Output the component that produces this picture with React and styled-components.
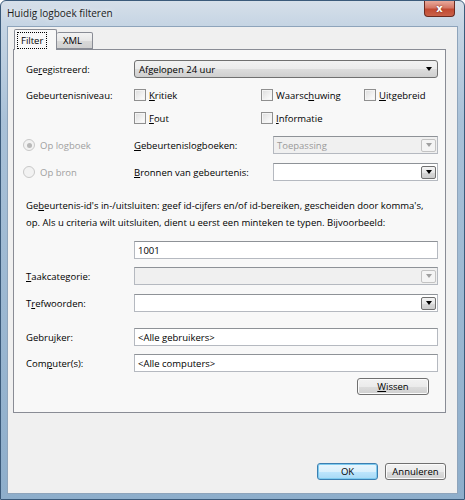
import React from 'react';
import styled, { createGlobalStyle } from 'styled-components';

const Global = createGlobalStyle`
  html, body { margin: 0; padding: 0; background: #ffffff; }
  body {
    font-family: "Open Sans", "Noto Sans", sans-serif;
    font-size: 9.5px;
    color: #000;
  }
  u { text-decoration: underline; text-underline-offset: 1px; }
`;

const Window = styled.div`
  width: 465px;
  height: 500px;
  box-sizing: border-box;
  display: flex;
  flex-direction: column;
  border: 1px solid #3b5a7a;
  border-radius: 6px 6px 0 0;
  padding: 0 6px 5px 6px;
  background: linear-gradient(180deg, #d6dfe9 0px, #c6d5e4 24px, #a9c1d8 120px, #8eaecb 100%);
`;

const TitleBar = styled.div`
  height: 25px;
  display: flex;
  justify-content: space-between;
  align-items: flex-start;
`;

const Title = styled.div`
  padding-top: 5px;
  font-size: 10px;
  color: #1a1a1a;
  text-shadow: 0 0 6px #ffffff;
`;

const CloseBtn = styled.div`
  width: 31px;
  height: 16px;
  margin-right: 3px;
  box-sizing: border-box;
  border: 1px solid #6b2a20;
  border-top: none;
  border-radius: 0 0 4px 4px;
  background: linear-gradient(180deg, #e9a99a 0%, #d47766 45%, #c24a32 55%, #c9624a 100%);
  color: #fff;
  font-family: "DejaVu Sans", sans-serif;
  font-weight: bold;
  font-size: 10px;
  display: flex;
  align-items: center;
  justify-content: center;
  text-shadow: 0 0 2px #6b2a20;
`;

const Client = styled.div`
  flex: 1;
  display: flex;
  flex-direction: column;
  background: #f0f0f0;
  border: 1px solid #8ea4bb;
  padding: 2px 11px 0 5px;
`;

const Tabs = styled.div`
  display: flex;
  align-items: flex-end;
  height: 20px;
  margin-left: 1px;
  position: relative;
  z-index: 1;
`;

const Tab = styled.div`
  box-sizing: border-box;
  height: ${p => (p.$active ? '21px' : '17px')};
  width: ${p => p.$w}px;
  margin-bottom: ${p => (p.$active ? '-1px' : '0')};
  border: 1px solid #898c95;
  border-bottom: ${p => (p.$active ? 'none' : '1px solid #898c95')};
  border-left: ${p => (p.$active ? '1px solid #898c95' : 'none')};
  border-radius: 2px 2px 0 0;
  background: ${p => (p.$active ? '#f8f8f8' : 'linear-gradient(180deg, #f3f3f3 0%, #e8e8e8 50%, #d9d9d9 51%, #d0d0d0 100%)')};
  display: flex;
  align-items: ${p => (p.$active ? 'flex-start' : 'center')};
  padding: ${p => (p.$active ? '2px 0 0 2px' : '0 0 0 6px')};
`;

const Focus = styled.span`
  border: 1px dotted #000;
  padding: 1px 3px 1px 3px;
  line-height: 13px;
`;

const Panel = styled.div`
  height: 364px;
  box-sizing: border-box;
  border: 1px solid #898c95;
  background: #f8f8f8;
  padding: 0 7px 0 12px;
  display: flex;
  flex-direction: column;
`;

const Row = styled.div`
  display: grid;
  grid-template-columns: 108px 1fr;
  align-items: center;
  height: ${p => p.$h}px;
  margin-top: ${p => p.$mt}px;
`;

const Label = styled.div`
  white-space: nowrap;
  color: ${p => (p.$disabled ? '#a0a0a0' : '#000')};
`;

const DropList = styled.div`
  height: 18px;
  box-sizing: border-box;
  border: 1px solid #707070;
  border-radius: 3px;
  background: linear-gradient(180deg, #f2f2f2 0%, #ebebeb 50%, #dddddd 51%, #cfcfcf 100%);
  display: flex;
  align-items: center;
  justify-content: space-between;
  padding: 0 5px 0 4px;
`;

const Arrow = styled.span`
  width: 0;
  height: 0;
  border-left: 3.5px solid transparent;
  border-right: 3.5px solid transparent;
  border-top: 4px solid ${p => (p.$disabled ? '#a0a0a0' : '#000')};
`;

const Field = styled.div`
  height: 18px;
  box-sizing: border-box;
  border: 1px solid #b5b9c0;
  border-top-color: #8e9297;
  background: ${p => (p.$disabled ? '#f0f0f0' : '#ffffff')};
  color: ${p => (p.$disabled ? '#9a9a9a' : '#000')};
  display: flex;
  align-items: center;
  justify-content: space-between;
  padding: 0 1px 0 3px;
`;

const FieldBtn = styled.div`
  width: 15px;
  height: 13px;
  box-sizing: border-box;
  border: 1px solid ${p => (p.$disabled ? '#c3c3c3' : '#707070')};
  border-radius: 2px;
  background: ${p => (p.$disabled ? '#f4f4f4' : 'linear-gradient(180deg, #f4f4f4 0%, #e6e6e6 50%, #d8d8d8 51%, #cccccc 100%)')};
  display: flex;
  align-items: center;
  justify-content: center;
`;

const Checks = styled.div`
  display: grid;
  grid-template-columns: 127px 103px auto;
  align-items: center;
`;

const CheckItem = styled.div`
  display: flex;
  align-items: center;
  gap: 3px;
`;

const Box = styled.span`
  width: 12px;
  height: 12px;
  box-sizing: border-box;
  border: 1px solid #8f8f8f;
  background: linear-gradient(135deg, #dcdcdc 0%, #f2f2f2 60%, #ffffff 100%);
  box-shadow: inset 0 0 0 1px #f4f4f4;
`;

const RadioItem = styled.div`
  display: flex;
  align-items: center;
  gap: 5px;
  margin-left: -3px;
  color: #a0a0a0;
`;

const RadioCircle = styled.span`
  width: 12px;
  height: 12px;
  box-sizing: border-box;
  border-radius: 50%;
  border: 1px solid #c8c8c8;
  background: #f2f2f2;
  display: flex;
  align-items: center;
  justify-content: center;
  &::after {
    content: '';
    width: 5px;
    height: 5px;
    border-radius: 50%;
    background: ${p => (p.$on ? '#b8b8b8' : 'transparent')};
  }
`;

const Split = styled.div`
  display: grid;
  grid-template-columns: 139px 1fr;
  align-items: center;
`;

const Para = styled.div`
  margin-top: 16px;
  line-height: 17px;
  height: 34px;
  white-space: nowrap;
`;

const ButtonRow = styled.div`
  display: flex;
  justify-content: flex-end;
  margin-top: ${p => p.$mt || 0}px;
  margin-right: ${p => p.$mr || 0}px;
`;

const Button = styled.div`
  width: ${p => p.$w}px;
  height: 17px;
  box-sizing: border-box;
  border: 1px solid ${p => (p.$default ? '#3c7fb1' : '#707070')};
  border-radius: 3px;
  background: ${p => (p.$default
    ? 'linear-gradient(180deg, #eaf6fd 0%, #d9f0fc 50%, #bee6fd 51%, #a7d9f5 100%)'
    : 'linear-gradient(180deg, #f2f2f2 0%, #ebebeb 50%, #dddddd 51%, #cfcfcf 100%)')};
  box-shadow: ${p => (p.$default ? 'inset 0 0 0 1px #7fcbef' : 'inset 0 0 0 1px #fbfbfb')};
  display: flex;
  align-items: center;
  justify-content: center;
`;

const Footer = styled.div`
  flex: 1;
  display: flex;
  align-items: flex-end;
  justify-content: flex-end;
  padding-bottom: 13px;
  gap: 7px;
`;

export default function App() {
  return (
    <>
      <Global />
      <Window>
        <TitleBar>
          <Title>Huidig logboek filteren</Title>
          <CloseBtn>x</CloseBtn>
        </TitleBar>
        <Client>
          <Tabs>
            <Tab $active $w={43}><Focus>Filter</Focus></Tab>
            <Tab $w={36}>XML</Tab>
          </Tabs>
          <Panel>
            <Row $h={18} $mt={10}>
              <Label>Ge<u>r</u>egistreerd:</Label>
              <DropList>
                <span>Afgelopen 24 uur</span>
                <Arrow />
              </DropList>
            </Row>
            <Row $h={14} $mt={10}>
              <Label>Gebeurtenisniveau:</Label>
              <Checks>
                <CheckItem><Box /><span><u>K</u>ritiek</span></CheckItem>
                <CheckItem><Box /><span>Waarsc<u>h</u>uwing</span></CheckItem>
                <CheckItem><Box /><span><u>U</u>itgebreid</span></CheckItem>
              </Checks>
            </Row>
            <Row $h={14} $mt={9}>
              <span />
              <Checks>
                <CheckItem><Box /><span><u>F</u>out</span></CheckItem>
                <CheckItem><Box /><span><u>I</u>nformatie</span></CheckItem>
              </Checks>
            </Row>
            <Row $h={18} $mt={11}>
              <RadioItem><RadioCircle $on /><span>Op logboek</span></RadioItem>
              <Split>
                <Label><u>G</u>ebeurtenislogboeken:</Label>
                <Field $disabled>
                  <span>Toepassing</span>
                  <FieldBtn $disabled><Arrow $disabled /></FieldBtn>
                </Field>
              </Split>
            </Row>
            <Row $h={18} $mt={9}>
              <RadioItem><RadioCircle /><span>Op bron</span></RadioItem>
              <Split>
                <Label><u>B</u>ronnen van gebeurtenis:</Label>
                <Field>
                  <span />
                  <FieldBtn><Arrow /></FieldBtn>
                </Field>
              </Split>
            </Row>
            <Para>
              Ge<u>b</u>eurtenis-id's in-/uitsluiten: geef id-cijfers en/of id-bereiken, gescheiden door komma's,<br />
              op. Als u criteria wilt uitsluiten, dient u eerst een minteken te typen. Bijvoorbeeld:
            </Para>
            <Row $h={18} $mt={10}>
              <span />
              <Field><span>1001</span></Field>
            </Row>
            <Row $h={18} $mt={8}>
              <Label><u>T</u>aakcategorie:</Label>
              <Field $disabled>
                <span />
                <FieldBtn $disabled><Arrow $disabled /></FieldBtn>
              </Field>
            </Row>
            <Row $h={18} $mt={9}>
              <Label>T<u>r</u>efwoorden:</Label>
              <Field>
                <span />
                <FieldBtn><Arrow /></FieldBtn>
              </Field>
            </Row>
            <Row $h={18} $mt={16}>
              <Label>Gebru<u>j</u>ker:</Label>
              <Field><span>&lt;Alle gebruikers&gt;</span></Field>
            </Row>
            <Row $h={18} $mt={8}>
              <Label>Com<u>p</u>uter(s):</Label>
              <Field><span>&lt;Alle computers&gt;</span></Field>
            </Row>
            <ButtonRow $mt={6} $mr={9}>
              <Button $w={72}><span><u>W</u>issen</span></Button>
            </ButtonRow>
          </Panel>
          <Footer>
            <Button $default $w={61}>OK</Button>
            <Button $w={61}>Annuleren</Button>
          </Footer>
        </Client>
      </Window>
    </>
  );
}
